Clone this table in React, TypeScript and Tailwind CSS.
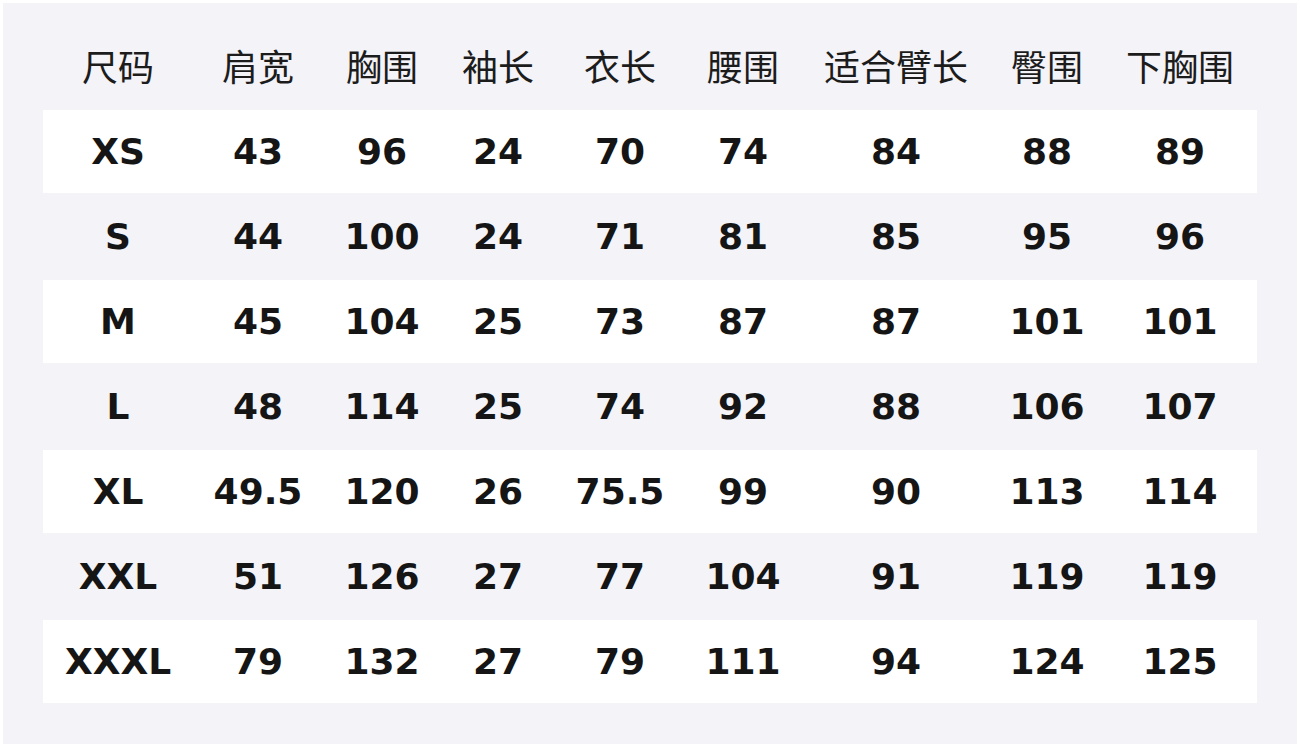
const headers = ["尺码", "肩宽", "胸围", "袖长", "衣长", "腰围", "适合臂长", "臀围", "下胸围"];

const rows = [
  ["XS", "43", "96", "24", "70", "74", "84", "88", "89"],
  ["S", "44", "100", "24", "71", "81", "85", "95", "96"],
  ["M", "45", "104", "25", "73", "87", "87", "101", "101"],
  ["L", "48", "114", "25", "74", "92", "88", "106", "107"],
  ["XL", "49.5", "120", "26", "75.5", "99", "90", "113", "114"],
  ["XXL", "51", "126", "27", "77", "104", "91", "119", "119"],
  ["XXXL", "79", "132", "27", "79", "111", "94", "124", "125"],
];

const cols = "grid grid-cols-[150px_130px_118px_114px_130px_116px_190px_112px_154px]";

export default function App() {
  return (
    <div className="w-[1300px] h-[748px] bg-white pt-[3px] pb-[4px] px-[3px]">
      <div className="h-full bg-[#f3f3f8] px-[40px] font-['DejaVu_Sans','Noto_Sans_CJK_SC',sans-serif] text-[#151515]">
        <div className={`${cols} h-[107px] items-center pt-[25px]`}>
          {headers.map((h) => (
            <div key={h} className="text-center text-[36px] leading-none font-normal text-[#1c1c1c]">
              {h}
            </div>
          ))}
        </div>
        {rows.map((r, i) => (
          <div
            key={r[0]}
            className={`${cols} items-center ${i % 2 === 0 ? "h-[83px] bg-white" : "h-[87px]"}`}
          >
            {r.map((v, j) => (
              <div key={j} className="text-center text-[36px] leading-none font-bold">
                {v}
              </div>
            ))}
          </div>
        ))}
      </div>
    </div>
  );
}
